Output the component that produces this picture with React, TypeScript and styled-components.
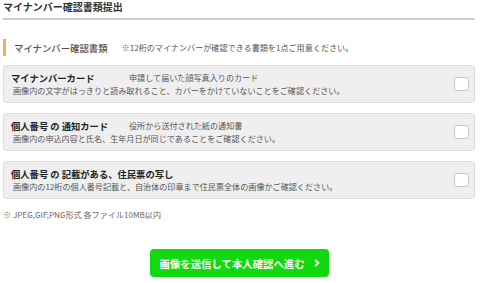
import styled, { createGlobalStyle } from 'styled-components';

const GlobalStyle = createGlobalStyle`
  body {
    margin: 0;
    background: #fff;
    font-family: "Noto Sans CJK JP", "Noto Sans", sans-serif;
    color: #333;
  }
`;

const Page = styled.div`
  padding: 0 5px 0 3px;
`;

const PageTitle = styled.h1`
  margin: 0;
  padding-bottom: 4px;
  border-bottom: 2px solid #cccccc;
  font-size: 10px;
  line-height: 14px;
  font-weight: 700;
  color: #333;
`;

const SectionHeading = styled.div`
  display: flex;
  align-items: center;
  margin-top: 19px;
  height: 17px;
  border-left: 3px solid #f6a95e;
  padding-left: 8px;

  h2 {
    margin: 0;
    font-size: 9.4px;
    font-weight: 500;
    color: #555;
  }

  span {
    margin-left: 14px;
    font-size: 8.1px;
    color: #555;
  }
`;

const CardList = styled.div`
  display: flex;
  flex-direction: column;
  gap: 10px;
  margin-top: 9px;
`;

const Card = styled.label`
  display: flex;
  align-items: center;
  justify-content: space-between;
  padding: 5px 5px 5px 7px;
  background: #efefef;
  border: 1px solid #dcdcdc;
  border-radius: 4px;
`;

const CardBody = styled.div`
  display: flex;
  flex-direction: column;
`;

const CardHead = styled.div`
  display: flex;
  align-items: center;
  height: 13px;
`;

const CardTitle = styled.span`
  min-width: 118px;
  font-size: 9.3px;
  font-weight: 700;
  color: #222;
  white-space: pre;
`;

const CardNote = styled.span`
  font-size: 8.1px;
  color: #555;
`;

const CardDesc = styled.div`
  padding-left: 2px;
  font-size: 8.1px;
  line-height: 13px;
  color: #555;
`;

const CheckBox = styled.span`
  width: 13px;
  height: 12px;
  background: #fff;
  border: 1px solid #c8c8c8;
  border-radius: 2px;
`;

const FileNote = styled.p`
  margin: 11px 0 0;
  font-size: 8.1px;
  line-height: 10px;
  color: #666;
`;

const Actions = styled.div`
  display: flex;
  justify-content: center;
  margin-top: 29px;
`;

const SubmitButton = styled.button`
  display: flex;
  align-items: center;
  gap: 9px;
  width: 179px;
  height: 28px;
  padding: 0 0 0 10px;
  border: none;
  border-radius: 4px;
  background: #10d910;
  color: #fff;
  font-family: inherit;
  font-size: 10.4px;
  font-weight: 700;
  cursor: pointer;
`;

const documents = [
  {
    title: 'マイナンバーカード',
    note: '申請して届いた顔写真入りのカード',
    desc: '画像内の文字がはっきりと読み取れること、カバーをかけていないことをご確認ください。',
  },
  {
    title: '個人番号 の 通知カード',
    note: '役所から送付された紙の通知書',
    desc: '画像内の申込内容と氏名、生年月日が同じであることをご確認ください。',
  },
  {
    title: '個人番号 の 記載がある、住民票の写し',
    note: '',
    desc: '画像内の12桁の個人番号記載と、自治体の印章まで住民票全体の画像かご確認ください。',
  },
];

const App = () => {
  return (
    <>
      <GlobalStyle />
      <Page>
        <PageTitle>マイナンバー確認書類提出</PageTitle>

        <SectionHeading>
          <h2>マイナンバー確認書類</h2>
          <span>※12桁のマイナンバーが確認できる書類を1点ご用意ください。</span>
        </SectionHeading>

        <CardList>
          {documents.map((doc) => (
            <Card key={doc.title}>
              <CardBody>
                <CardHead>
                  <CardTitle>{doc.title}</CardTitle>
                  {doc.note && <CardNote>{doc.note}</CardNote>}
                </CardHead>
                <CardDesc>{doc.desc}</CardDesc>
              </CardBody>
              <CheckBox />
            </Card>
          ))}
        </CardList>

        <FileNote>※ JPEG,GIF,PNG形式 各ファイル10MB以内</FileNote>

        <Actions>
          <SubmitButton type="button">
            画像を送信して本人確認へ進む
            <svg width="6" height="8" viewBox="0 0 6 8" fill="none">
              <path d="M1.2 1 L4.4 4 L1.2 7" stroke="#fff" strokeWidth="1.8" />
            </svg>
          </SubmitButton>
        </Actions>
      </Page>
    </>
  );
};

export default App;
